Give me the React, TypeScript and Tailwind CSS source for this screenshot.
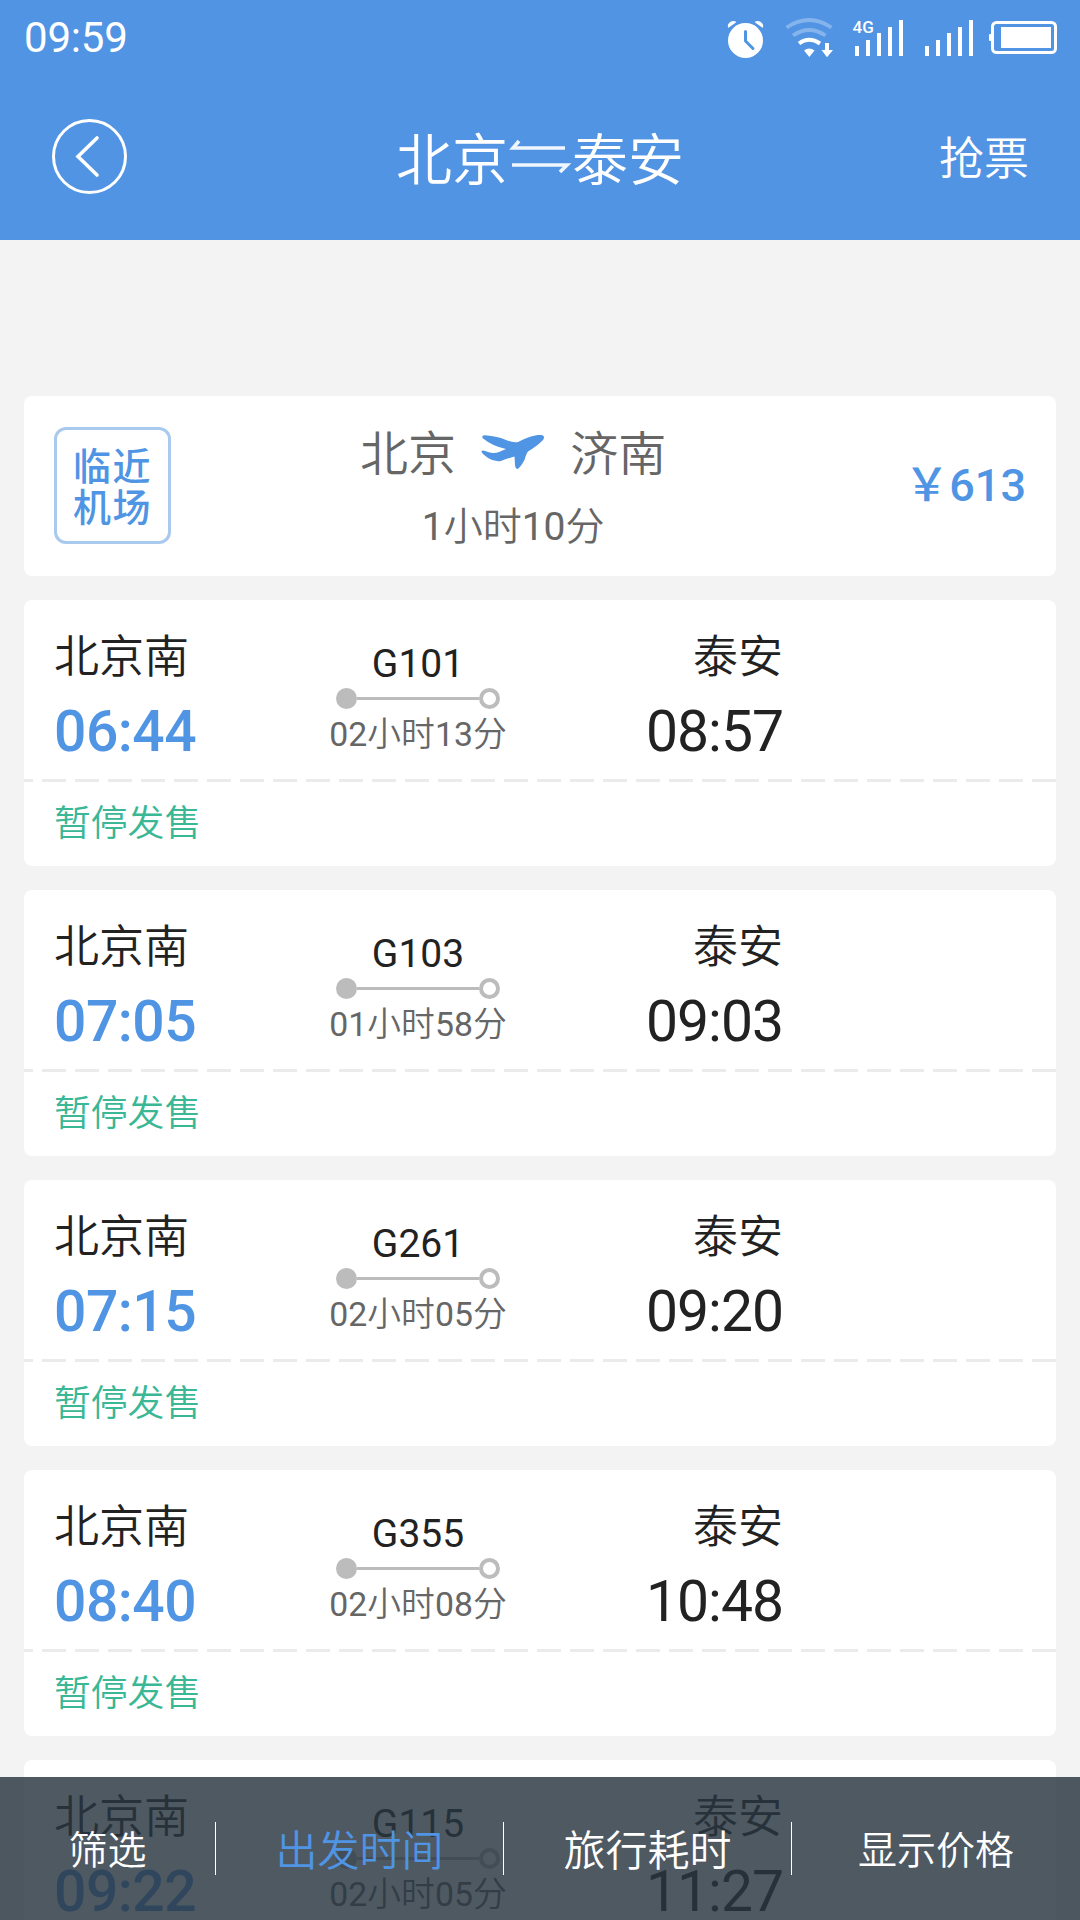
import React from 'react';

const trains = [
    { no: 'G101', from: '北京南', to: '泰安', depart: '06:44', arrive: '08:57', duration: '02小时13分' },
    { no: 'G103', from: '北京南', to: '泰安', depart: '07:05', arrive: '09:03', duration: '01小时58分' },
    { no: 'G261', from: '北京南', to: '泰安', depart: '07:15', arrive: '09:20', duration: '02小时05分' },
    { no: 'G355', from: '北京南', to: '泰安', depart: '08:40', arrive: '10:48', duration: '02小时08分' },
    { no: 'G115', from: '北京南', to: '泰安', depart: '09:22', arrive: '11:27', duration: '02小时05分' },
];

const StatusIcons: React.FC = () => (
    <svg width="332" height="44" viewBox="727 17 332 44" fill="none" className="mt-1">
        {/* alarm */}
        <path d="M728.5 27 V25 Q731 20.5 735.5 22 Z M762.5 27 V25 Q760 20.5 755.5 22 Z" fill="#fff" stroke="#fff" strokeWidth="1.2" strokeLinejoin="round" />
        <circle cx="745.5" cy="40.5" r="17.5" fill="#fff" />
        <path d="M745.5 31.5 V41 L753 48.5" stroke="#5094e4" strokeWidth="3" strokeLinecap="round" strokeLinejoin="round" />
        {/* wifi */}
        <path d="M786.5 27.5 Q809 12.5 831.5 27.5" stroke="#85b4ec" strokeWidth="3.8" />
        <path d="M793 35.5 Q809 24.5 825.5 35.5" stroke="#85b4ec" strokeWidth="3.8" />
        <path d="M799 43.5 Q809 36 820 43.5" stroke="#fff" strokeWidth="4" />
        <path d="M804 50.5 Q809 46.5 814.5 50.5 L809.3 57 Z" fill="#fff" />
        <path d="M825 43 H829 V50 H833 L827 57.3 L821.5 50 H825 Z" fill="#fff" />
        {/* sim 1 */}
        <text x="852.5" y="33.2" fill="#fff" fontSize="17" fontWeight="500" className="font-['Roboto']">4G</text>
        <path d="M855 46h4v10h-4z M866 40h4v16h-4z M877 33h4v23h-4z M888 27h4v29h-4z M899 20h4v36h-4z" fill="#fff" />
        {/* sim 2 */}
        <path d="M925 46h4v10h-4z M936 40h4v16h-4z M947 33h4v23h-4z M958 27h4v29h-4z M969 20h4v36h-4z" fill="#fff" />
        {/* battery */}
        <rect x="992.5" y="22.5" width="63" height="30" rx="4" stroke="#fff" strokeWidth="3" />
        <rect x="1001" y="27" width="50" height="21" fill="#fff" />
        <rect x="989" y="34" width="3" height="7" rx="1" fill="#fff" />
    </svg>
);

const Header: React.FC = () => (
    <header className="shrink-0 h-[240px] bg-[#5194e4] text-white">
        <div className="h-[74px] flex items-center justify-between pl-6 pr-[21px]">
            <span className="pt-0.5 text-[42px] leading-none tracking-[-0.2px]">09:59</span>
            <StatusIcons />
        </div>
        <div className="h-[166px] grid grid-cols-[1fr_auto_1fr] items-center px-[51px]">
            <svg width="77" height="77" viewBox="0 0 77 77" fill="none" stroke="#fff" className="mb-0.5">
                <circle cx="38.5" cy="38.5" r="36" strokeWidth="3" />
                <path d="M46 20 L27 38.5 L46 57" strokeWidth="3.6" strokeLinecap="round" />
            </svg>
            <h1 className="pt-2 flex items-center text-[56px] leading-none font-normal">
                北京
                <svg width="64" height="36" viewBox="-1 0 64 36" fill="none" stroke="#f0f6fe" strokeWidth="3.6" className="mb-2.5">
                    <path d="M56 10 H4 L10 3" />
                    <path d="M3 27 H58 L51 34" />
                </svg>
                泰安
            </h1>
            <span className="pt-1 justify-self-end text-[45px] leading-none">抢票</span>
        </div>
    </header>
);

const FlightCard: React.FC = () => (
    <section className="shrink-0 h-[180px] bg-white rounded-lg px-[30px] flex items-center">
        <div className="w-[117px] h-[117px] mb-px pb-1 border-[3px] border-[#a9c9ef] rounded-xl flex flex-col items-center justify-center text-[#5094e4] text-[38px] leading-[41px] tracking-[1.5px] font-medium font-['Noto_Sans_CJK_SC',sans-serif]">
            <span>临近</span>
            <span>机场</span>
        </div>
        <div className="flex-1 pt-1 pr-[49px] flex flex-col items-center text-[#666]">
            <div className="flex items-center text-[48px] leading-[60px]">
                北京
                <svg width="66" height="36" viewBox="0 0 66 36" className="mx-6 mb-1" fill="#5094e4">
                    <path d="M2.5 3 Q1.5 0 5 .3 Q18 1.500 26 5 Q33 8 38 7 Q48 2 53 1 Q60 -1 63 .5 Q65.5 2.5 62 6 Q57 11 48 16.5 Q46 19 44.500 25 Q40 33 37.500 34 Q35.500 34 35 30 L34.500 21.500 Q27 23.500 21 26 Q14 27 8 23 Q1 18 1.500 16 Q3 14.500 8 17 Q14 19 19 17 L26 14 Q12 11 2.500 3 Z" />
                </svg>
                济南
            </div>
            <span className="mt-[18px] text-[39px] leading-[48px]">1小时10分</span>
        </div>
        <span className="pb-0.5 text-[45px] leading-none font-medium text-[#5094e4] font-['Roboto','Noto_Sans_CJK_SC',sans-serif]">￥613</span>
    </section>
);

const TrainCard: React.FC<{ train: (typeof trains)[number] }> = ({ train }) => (
    <section className="h-[266px] shrink-0 bg-white rounded-lg overflow-hidden text-[#222]">
        <div className="h-[179px] flex px-[30px]">
            <div className="w-[235px] pt-[31px] flex flex-col">
                <span className="text-[45px] leading-[54px]">{train.from}</span>
                <span className="mt-3.5 text-[57px] leading-[66px] tracking-[-0.5px] font-medium text-[#5094e4]">{train.depart}</span>
            </div>
            <div className="w-[258px] pt-[42px] flex flex-col items-center">
                <span className="text-[39px] leading-[44px]">{train.no}</span>
                <div className="mt-0.5 w-[164px] flex items-center">
                    <span className="size-[21px] rounded-full bg-[#bcbcbc]" />
                    <span className="flex-1 h-[3px] bg-[#bcbcbc]" />
                    <span className="size-[21px] rounded-full border-4 border-[#bcbcbc]" />
                </div>
                <span className="mt-[5px] text-[33.8px] leading-[42px] text-[#666]">{train.duration}</span>
            </div>
            <div className="w-[236px] pt-[31px] flex flex-col items-end">
                <span className="text-[45px] leading-[54px]">{train.to}</span>
                <span className="mt-3.5 text-[57px] leading-[66px] tracking-[-1px]">{train.arrive}</span>
            </div>
        </div>
        <div className="h-[3px] bg-[repeating-linear-gradient(to_left,#ebebeb_0_24px,#fff_24px_33px)]" />
        <div className="h-[84px] px-[30px] flex items-center text-[36.8px] leading-none text-[#3ab795]">暂停发售</div>
    </section>
);

const BottomBar: React.FC = () => (
    <nav className="absolute inset-x-0 bottom-0 h-[143px] flex items-center bg-[#28343f]/82 text-white text-[42px] leading-none">
        <span className="w-[215px] pt-1.5 text-center text-[39px]">筛选</span>
        <span className="w-px h-[53px] bg-white" />
        <span className="w-[287px] pt-1.5 text-center text-[#5094e4]">出发时间</span>
        <span className="w-px h-[53px] bg-white" />
        <span className="w-[287px] pt-1.5 text-center">旅行耗时</span>
        <span className="w-px h-[53px] bg-white" />
        <span className="flex-1 pt-1.5 text-center text-[39px]">显示价格</span>
    </nav>
);

const App: React.FC = () => {
    return (
        <div className="relative w-[1080px] h-[1920px] overflow-hidden flex flex-col bg-[#f3f3f3] font-['Roboto','Noto_Sans_CJK_SC_DemiLight','Noto_Sans_CJK_SC',sans-serif]">
            <Header />
            <main className="flex-1 min-h-0 overflow-hidden flex flex-col gap-6 px-6 pt-[156px]">
                <FlightCard />
                {trains.map(train => <TrainCard key={train.no} train={train} />)}
            </main>
            <BottomBar />
        </div>
    );
};

export default App;
